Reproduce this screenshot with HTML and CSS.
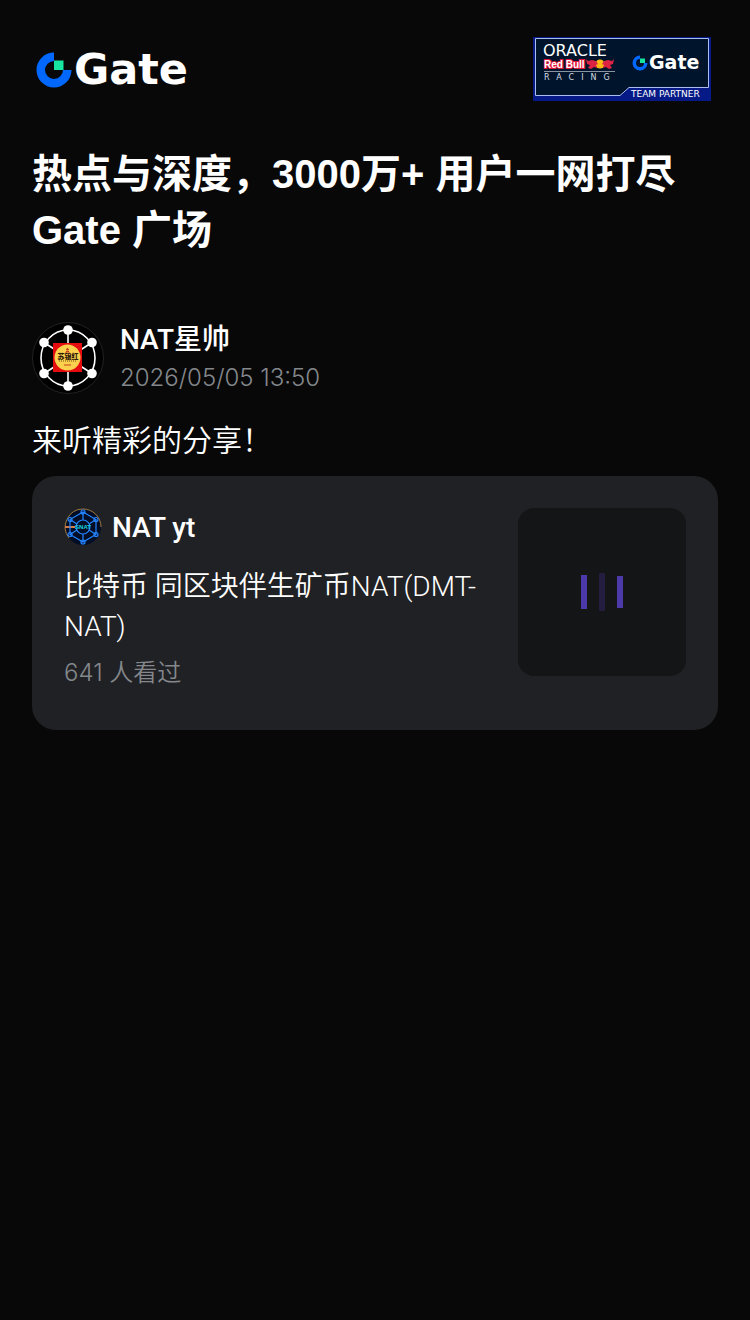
FILE: index.html
```html
<!DOCTYPE html>
<html lang="zh-CN">
<head>
<meta charset="utf-8">
<meta name="viewport" content="width=device-width, initial-scale=1">
<title>Gate 广场</title>
<link rel="stylesheet" href="styles.css">
</head>
<body>
<main class="page">
  <header class="header">
    <svg class="brand" viewBox="0 0 180 64" role="img" aria-label="Gate">
      <path class="ring" d="M22 15.500A17.500 17.500 0 1 0 39.500 33H31A9 9 0 1 1 22 24Z"/>
      <rect class="chip" x="22" y="23.500" width="9.500" height="9.500"/>
      <text class="wordmark" x="42" y="47">Gate</text>
    </svg>
    <svg class="partner" viewBox="0 0 178 64" role="img" aria-label="Oracle Red Bull Racing, Gate, Team Partner">
      <rect class="partner-edge" width="178" height="64"/>
      <path class="partner-panel" d="M2.500 1.500H175.500V50.500H96L87 58.500H2.500Z"/>
      <text class="oracle" x="10" y="19">ORACLE</text>
      <text class="redbull" x="11" y="31">Red Bull</text>
      <circle class="sun" cx="67" cy="27" r="4.500"/>
      <path class="bull" d="M53 22l2 2 4-1 4 1 2 3-2 1 1 3-3-1-3 2-3-1 2-3-3-1zM81 22l-2 2-4-1-4 1-2 3 2 1-1 3 3-1 3 2 3-1-2-3 3-1z"/>
      <path class="rule" d="M11 34.500H82"/>
      <text class="racing" x="11" y="43">RACING</text>
      <path class="ring" d="M107 18.500A7.500 7.500 0 1 0 114.500 26H111A4 4 0 1 1 107 22Z"/>
      <rect class="chip" x="107" y="21.500" width="5" height="4.500"/>
      <text class="partner-gate" x="116" y="32">Gate</text>
      <text class="team" x="98" y="60">TEAM PARTNER</text>
    </svg>
  </header>
  <h1 class="title">热点与深度，3000万+ 用户一网打尽<br>Gate 广场</h1>
  <article class="post">
    <div class="author">
      <svg class="avatar" viewBox="0 0 72 72" aria-hidden="true">
        <circle class="avatar-disc" cx="36" cy="36" r="35.500"/>
        <g class="net">
          <ellipse cx="36" cy="36" rx="27" ry="28"/>
          <path d="M36 8V64M12 20.500L60 51.500M60 20.500L12 51.500"/>
        </g>
        <g class="nodes">
          <circle cx="36" cy="8" r="4.800"/><circle cx="36" cy="64" r="4.800"/>
          <circle cx="12" cy="20.500" r="4.800"/><circle cx="60" cy="20.500" r="4.800"/>
          <circle cx="12" cy="51.500" r="4.800"/><circle cx="60" cy="51.500" r="4.800"/>
        </g>
        <rect class="seal" x="21" y="21" width="29" height="29"/>
        <circle class="seal-disc" cx="35.500" cy="35.500" r="13"/>
        <path class="seal-mark" d="M35.500 26l-1 2h2zM33 31h5M34 29.500h3M32 43h7"/>
        <text class="seal-name" x="36" y="37">苏银红</text>
        <path class="seal-line" d="M27 39H45"/>
      </svg>
      <div class="author-text">
        <div class="name">NAT星帅</div>
        <time class="time" datetime="2026-05-05T13:50">2026/05/05 13:50</time>
      </div>
    </div>
    <p class="message">来听精彩的分享！</p>
    <section class="card">
      <div class="card-body">
        <div class="host">
          <svg class="host-avatar" viewBox="0 0 40 40" aria-hidden="true">
            <circle class="host-disc" cx="19" cy="19" r="18"/>
            <path class="host-gold" d="M5 30A18 18 0 0 1 19 1A18 18 0 0 1 37 19"/>
            <path class="host-glow" d="M1 19H11"/>
            <g class="host-net">
              <path d="M19 4L32 11.500V26.500L19 34L6 26.500V11.500ZM19 4V12M19 26V34M6 11.500L13 16M32 11.500L25 16M6 26.500L13 22M32 26.500L25 22"/>
              <circle cx="19" cy="19" r="7"/>
              <circle cx="19" cy="4" r="2"/><circle cx="19" cy="34" r="2"/><circle cx="6" cy="11.500" r="2"/>
              <circle cx="32" cy="11.500" r="2"/><circle cx="6" cy="26.500" r="2"/><circle cx="32" cy="26.500" r="2"/>
            </g>
            <text class="host-mark" x="19" y="21">SNAT</text>
          </svg>
          <span class="name">NAT yt</span>
        </div>
        <p class="topic">比特币 同区块伴生矿币NAT(DMT-NAT)</p>
        <p class="views">641 人看过</p>
      </div>
      <div class="cover" role="img" aria-label="加载中">
        <span class="bar"></span><span class="bar bar-dim"></span><span class="bar bar-short"></span>
      </div>
    </section>
  </article>
</main>
</body>
</html>
```
FILE: styles.css
```css
* { box-sizing: border-box; }
body {
  margin: 0;
  background: #080808;
  color: #fff;
  font-family: Inter, "Noto Sans CJK SC", sans-serif;
}
.page { padding: 37px 32px 32px; }
h1, p { margin: 0; }

.header { display: flex; justify-content: space-between; align-items: flex-start; padding-right: 7px; }
.brand { width: 180px; height: 64px; }
.partner { width: 178px; height: 64px; }
.ring { fill: #0068ff; }
.chip { fill: #17e6a1; }
.wordmark, .partner-gate { font-family: "DejaVu Sans", sans-serif; font-weight: 700; fill: #fff; }
.wordmark { font-size: 43px; }
.partner-gate { font-size: 19px; }
.partner-edge { fill: #051a86; }
.partner-panel { fill: #00152b; stroke: #a9bdf0; }
.oracle { font: 400 16px "DejaVu Sans", sans-serif; fill: #fff; }
.redbull { font: 700 10px "Liberation Sans", sans-serif; fill: #fff; stroke: #e2163d; stroke-width: 2px; paint-order: stroke; }
.sun { fill: #fdb913; }
.bull { fill: #dc2344; }
.rule { stroke: #8795a4; fill: none; }
.racing { font: 400 8px "DejaVu Sans", sans-serif; letter-spacing: 7px; fill: #d5dbe3; }
.team { font: 400 9px "DejaVu Sans", sans-serif; fill: #fff; }

.title { margin-top: 45px; font-family: "Liberation Sans", "Noto Sans CJK SC", sans-serif; font-size: 40px; line-height: 56px; font-weight: 600; }
.post { margin-top: 62px; }
.author { display: flex; align-items: center; gap: 16px; }
.avatar { width: 72px; height: 72px; flex: none; }
.avatar-disc { fill: #000; stroke: #222; }
.net { fill: none; stroke: #fff; stroke-width: 1.600; }
.nodes { fill: #fff; }
.seal { fill: #e50c10; }
.seal-disc { fill: #fad04c; }
.seal-mark { stroke: #c9401c; fill: #c9401c; }
.seal-name { font: 900 7px "Noto Sans CJK SC", sans-serif; text-anchor: middle; fill: #33200a; }
.seal-line { stroke: #6b4a14; stroke-dasharray: 1 1; }
.name { font-family: Roboto, "Noto Sans CJK SC", sans-serif; font-size: 28px; line-height: 40px; font-weight: 500; }
.time { display: block; font-size: 24px; line-height: 36px; font-weight: 300; color: #84888c; }
.message { margin-top: 20px; font-size: 30px; line-height: 48px; font-weight: 350; }

.card { display: flex; align-items: flex-start; gap: 32px; margin-top: 12px; padding: 32px 32px 39px; border-radius: 24px; background: #202124; }
.card-body { flex: 1; min-width: 0; }
.host { display: flex; align-items: center; gap: 8px; }
.host-avatar { width: 40px; height: 40px; flex: none; }
.host-disc { fill: #020e26; }
.host-gold { fill: none; stroke: #a37942; }
.host-glow { stroke: #d07b4b; stroke-width: 2; }
.host-net { fill: none; stroke: #2584ff; stroke-width: 1.200; }
.host-mark { font: 700 6px "Liberation Sans", sans-serif; text-anchor: middle; fill: #18d9e6; }
.topic { margin-top: 19px; font-family: Roboto, "Noto Sans CJK SC", sans-serif; font-size: 28px; line-height: 40px; font-weight: 350; line-break: anywhere; }
.views { margin-top: 8px; font-size: 24px; line-height: 36px; font-weight: 350; color: #84888c; }
.cover { display: flex; align-items: center; justify-content: center; gap: 12px; width: 168px; height: 168px; flex: none; border-radius: 16px; background: #141516; }
.bar { width: 6px; height: 34px; background: #4c3aaa; }
.bar-dim { height: 38px; background: #241d3f; }
.bar-short { height: 32px; }
```
